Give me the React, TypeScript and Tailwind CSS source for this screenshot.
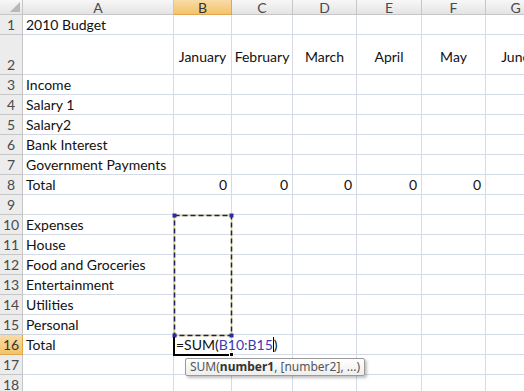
import React from 'react'

const COLS = [
  { key: 'A', w: 151 },
  { key: 'B', w: 58 },
  { key: 'C', w: 61 },
  { key: 'D', w: 64 },
  { key: 'E', w: 65 },
  { key: 'F', w: 64 },
  { key: 'G', w: 60 },
]

const LABELS: Record<number, string> = {
  1: '2010 Budget',
  3: 'Income',
  4: 'Salary 1',
  5: 'Salary2',
  6: 'Bank Interest',
  7: 'Government Payments',
  8: 'Total',
  10: 'Expenses',
  11: 'House',
  12: 'Food and Groceries',
  13: 'Entertainment',
  14: 'Utilities',
  15: 'Personal',
  16: 'Total',
}

const MONTHS = ['January', 'February', 'March', 'April', 'May', 'June']

const ROWS = Array.from({ length: 18 }, (_, i) => i + 1)

function ColHeader({ label, active }: { label: string; active?: boolean }) {
  return (
    <div
      className={
        'h-[15px] flex items-center justify-center border-r border-b text-[14px] leading-[15px] ' +
        (active
          ? 'bg-gradient-to-b from-[#f9dba6] to-[#f1c46a] border-[#e3a54c] text-[#333]'
          : 'bg-gradient-to-b from-[#f7f7f7] to-[#e4e4e4] border-[#c6c6c6] text-[#4a4a4a]')
      }
    >
      {label}
    </div>
  )
}

function RowHeader({ n, tall, active }: { n: number; tall?: boolean; active?: boolean }) {
  return (
    <div
      className={
        'flex justify-center items-end border-r border-b text-[14px] leading-[18px] ' +
        (tall ? 'h-[40px] ' : 'h-[20px] ') +
        (active
          ? 'bg-gradient-to-b from-[#f9dba6] to-[#f1c46a] border-[#e3a54c] text-[#333]'
          : 'bg-[#ececec] border-[#c6c6c6] text-[#4a4a4a]')
      }
    >
      {n}
    </div>
  )
}

export default function App() {
  return (
    <div
      className="w-[524px] h-[391px] overflow-hidden bg-white relative text-[#111]"
      style={{ fontFamily: 'Lato, "Liberation Sans", sans-serif' }}
    >
      <div className="grid grid-cols-[23px_151px_58px_61px_64px_65px_64px_60px] w-[546px]">
        {/* top-left corner */}
        <div className="h-[15px] bg-gradient-to-b from-[#f7f7f7] to-[#e4e4e4] border-r border-b border-[#c6c6c6] flex items-end justify-end p-[2px]">
          <svg width="10" height="10" viewBox="0 0 10 10">
            <polygon points="10,0 10,10 0,10" fill="#b8b8b8" />
          </svg>
        </div>
        {COLS.map((c) => (
          <ColHeader key={c.key} label={c.key} active={c.key === 'B'} />
        ))}

        {ROWS.map((r) => {
          const tall = r === 2
          const h = tall ? 'h-[40px]' : 'h-[20px]'
          return (
            <React.Fragment key={r}>
              <RowHeader n={r} tall={tall} active={r === 16} />
              {COLS.map((c, ci) => {
                let content: React.ReactNode = null
                let align = 'justify-start pl-[3px] items-end'
                if (ci === 0 && LABELS[r]) content = LABELS[r]
                if (r === 2 && ci > 0) {
                  content = MONTHS[ci - 1]
                  align = 'justify-center items-center pt-[4px]'
                }
                if (r === 8 && ci > 0 && ci < 6) {
                  content = '0'
                  align = 'justify-end pr-[4px] items-end'
                }
                if (r === 16 && ci === 1) {
                  content = (
                    <span className="relative z-10 pl-[2px]">
                      =SUM(<span className="text-[#3b3bb8]">B10:B15</span>
                      <span className="inline-block w-[1px] h-[15px] bg-black align-[-2px]" />)
                    </span>
                  )
                  align = 'justify-start items-end'
                }
                return (
                  <div
                    key={c.key}
                    className={`${h} flex ${align} border-r border-b border-[#d4dbe6] text-[14px] leading-[18px] whitespace-nowrap overflow-visible`}
                  >
                    {content}
                  </div>
                )
              })}
            </React.Fragment>
          )
        })}
      </div>

      {/* referenced range B10:B15 (marching ants) */}
      <svg className="absolute left-[172px] top-[213px]" width="62" height="125" viewBox="0 0 62 125">
        <rect x="2.5" y="2.5" width="57" height="120" fill="none" stroke="#e8e070" strokeWidth="1.5" />
        <rect x="2.5" y="2.5" width="57" height="120" fill="none" stroke="#1c1f66" strokeWidth="1.5" strokeDasharray="5 3" />
        <rect x="0.5" y="0.5" width="4" height="4" fill="#2a2f9c" />
        <rect x="57.5" y="0.5" width="4" height="4" fill="#2a2f9c" />
        <rect x="0.5" y="120.5" width="4" height="4" fill="#2a2f9c" />
        <rect x="57.5" y="120.5" width="4" height="4" fill="#2a2f9c" />
      </svg>

      {/* active cell B16 */}
      <div className="absolute left-[173px] top-[337px] w-[2px] h-[19px] bg-black" />
      <div className="absolute left-[173px] top-[354px] w-[58px] h-[2px] bg-black" />
      <div className="absolute left-[229px] top-[352px] w-[5px] h-[5px] bg-black border border-white" />

      {/* function tooltip */}
      <div
        className="absolute left-[185px] top-[358px] h-[18px] px-[4px] flex items-center bg-gradient-to-b from-white to-[#eeeeee] border border-[#9a9a9a] rounded-[2px] shadow-[2px_2px_3px_rgba(0,0,0,0.25)] text-[12px] text-[#555] whitespace-nowrap leading-none"
        style={{ fontFamily: '"Noto Sans", "Liberation Sans", sans-serif' }}
      >
        SUM(<span className="font-bold text-[#333]">number1</span>, [number2], ...)
      </div>
    </div>
  )
}
